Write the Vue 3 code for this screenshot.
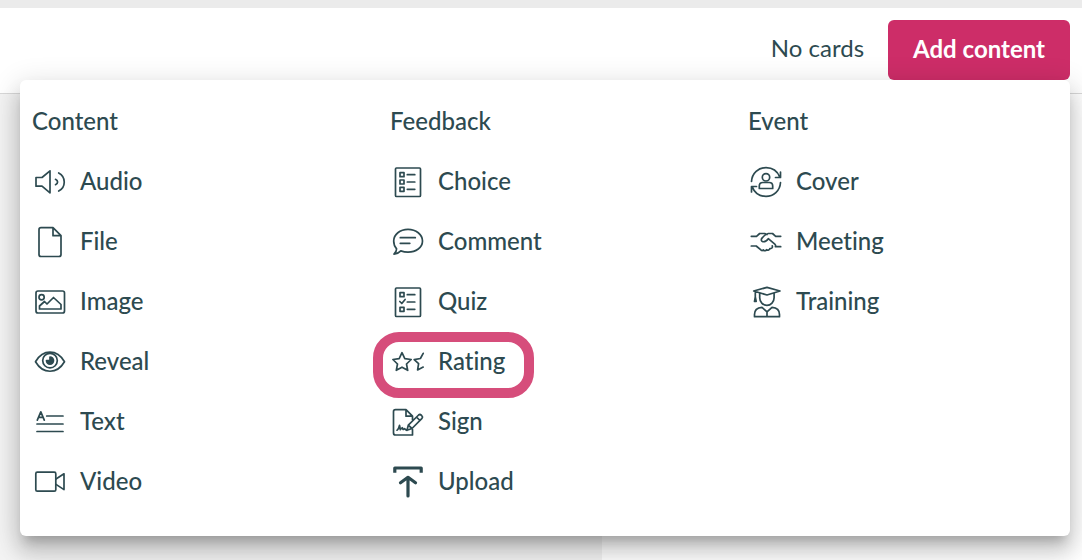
<script setup>
import { ref } from 'vue'

const open = ref(true)

const groups = [
  {
    title: 'Content',
    items: [
      { name: 'Audio', icon: 'audio' },
      { name: 'File', icon: 'file' },
      { name: 'Image', icon: 'image' },
      { name: 'Reveal', icon: 'reveal' },
      { name: 'Text', icon: 'text' },
      { name: 'Video', icon: 'video' },
    ],
  },
  {
    title: 'Feedback',
    items: [
      { name: 'Choice', icon: 'choice' },
      { name: 'Comment', icon: 'comment' },
      { name: 'Quiz', icon: 'quiz' },
      { name: 'Rating', icon: 'rating', marked: true },
      { name: 'Sign', icon: 'sign' },
      { name: 'Upload', icon: 'upload' },
    ],
  },
  {
    title: 'Event',
    items: [
      { name: 'Cover', icon: 'cover' },
      { name: 'Meeting', icon: 'meeting' },
      { name: 'Training', icon: 'training' },
    ],
  },
]

const icons = {
  audio:
    '<path d="M4 13.500h6l8-6.700v22l-8-6.600H4z"/><path d="M23.500 15.300c2.800 1.400 2.800 4 0 5.400M26.700 8.900c7.400 3.800 7.400 14.400 0 18.200"/>',
  file:
    '<path d="M9 3.700h12l8 8V30.500a2 2 0 0 1-2 2H9a2 2 0 0 1-2-2V5.700a2 2 0 0 1 2-2zM21 3.700v8h8"/>',
  image:
    '<rect x="4" y="7" width="28.500" height="22" rx="2"/><circle cx="9.600" cy="13.300" r="2.600"/><path d="M7.500 25v-3l5-4.500 2.500 2.500 6.500-6.500L29 20.500V25z"/>',
  reveal:
    '<path d="M3.500 17.700C11 5 25 5 32.500 17.700C25 30.400 11 30.400 3.500 17.700z"/><circle cx="18" cy="16.600" r="7.300"/><path d="M18 13.100V16.600H14.500A3.500 3.500 0 1 0 18 13.100z" fill="currentColor"/>',
  text:
    '<path d="M5.300 16.200l3.500-8.400 3.500 8.400M6.500 13.400h4.600M14.700 12H31M5 20h26M5 27.500h26"/>',
  video:
    '<rect x="3.800" y="8.200" width="20" height="19" rx="1.500"/><path d="M24 15l8-5.200v15.800l-8-5.200"/>',
  choice:
    '<rect x="5.500" y="4" width="25" height="28.500" rx="1"/><path d="M10 8.700h4v4h-4zM10 16h4v4h-4zM10 23.300h4v4h-4zM17.300 10.700h7.500M17.300 18h7.500M17.300 25.300h7.500"/>',
  comment:
    '<path d="M4 30.200c1.700-1.800 2.600-3.300 2.600-5.400C4.700 22.800 3.700 20 3.700 17C3.700 10.500 10 5.400 18 5.400S32.500 10.500 32.500 17S26 28.200 18 28.200c-2.500 0-5-.5-7.200-1.300C9 28.800 7 30 4 30.200z"/><path d="M10.300 13.700h15M10.300 19.300h9.500"/>',
  quiz:
    '<rect x="5.500" y="4" width="25" height="28.500" rx="1"/><path d="M10 8.700h4v4h-4zM9.800 17.500l2 2 3.300-4M10 23.300h4v4h-4zM17.300 10.700h7.500M17.300 18h7.500M17.300 25.300h7.500"/>',
  rating:
    '<path d="M12 8.700l2.800 5.900 6.400.9-4.700 4.500 1.200 6.300L12 23.200l-5.700 3.100 1.200-6.300L2.900 15.500l6.300-.9z"/><path d="M33.200 9.300l-2.800 5.200-6.200 1.200 4.400 4-1 6.200 5.600-2.800"/>',
  sign:
    '<path d="M22.500 25.500V31H5.500a2 2 0 0 1-2-2V7.700a2 2 0 0 1 2-2H16l6.500 6.500v4M16 5.700v6.500h6.500M17 26.300l1.300-5.200L28.600 11c1.800-1.500 4.900 1.300 3.400 3.300L22 24.500zM26.500 13.200l3.500 3.300M18.300 21.100l3.700 3.400M7 26.200c1.300-.5 2-2.800 2.500-4.800.6 1.500.4 3.500.8 4.300.8-.8 1.200-1.800 2-2 .6.300.2 1.400.9 1.800.7-.2.900-.8 1.500-.8.600.8 1.300 1.400 2.300 1.600"/>',
  upload:
    '<path d="M4.800 8.800V4H31.200V8.800" stroke-width="3.200" stroke-linecap="butt"/><path d="M18 32V14M10.500 18.800L18 13.300l7.500 5.500" stroke-width="3.200"/>',
  cover:
    '<circle cx="18" cy="13.300" r="3.700"/><path d="M11.300 24.500V22c0-2.300 1.500-3.500 3.500-3.500h6.400c2 0 3.500 1.200 3.500 3.500v2.500zM3.500 17.500C4 9 10.500 3.600 18 3.600c6.500 0 11.500 3.700 13.800 9.500M32.500 18.500C32 27 25.500 32.400 18 32.400c-6.500 0-11.500-3.700-13.800-9.500M32.500 8v5.500h-5M3.500 28v-5.500h5"/>',
  meeting:
    '<path d="M3.300 12.300h5.200l3.200-2.800h5l2.300 1M3.300 22h4.900l5 4.200c.9.600 1.700.3 2-.4 1.500 1.500 2.600 1 3.300-.1 1.600.9 2.900.3 3.400-1.200 1.700.3 2.900-.8 2.400-2.600M32.700 12.300h-5l-3.200-2.800h-4.300c-2.300.4-4.200 2.300-6.200 4.600-1.200 1.500-.7 3.300.8 3.600 2.500.3 4.200-1.100 5.500-3l6.500 5.400c.9.900 1.200 1.600.6 2.600h5.300"/>',
  training:
    '<path d="M5.700 7L19 3.400 32 7l-13 4zM11.700 9v4.800c0 4 3.200 7.500 7.200 7.500s7.200-3.500 7.200-7.500V9M7.300 7.800v9M7.300 13l-.8 4.300h1.700zM14 23.300c-4.800.3-7.500 3-7.500 7.200V32.700h25v-2.200c0-4.200-2.700-6.900-7.500-7.200l-5 4.500zM19 28v4.700"/>',
}
</script>

<template>
  <div class="page">
    <header class="bar">
      <span class="count">No cards</span>
      <button class="add" type="button" :aria-expanded="open" aria-controls="content-menu" @click="open = !open">
        Add content
      </button>
      <nav v-show="open" id="content-menu" class="menu" aria-label="Add content">
        <section v-for="group in groups" :key="group.title" class="group">
          <h2 class="title">{{ group.title }}</h2>
          <ul class="list">
            <li v-for="item in group.items" :key="item.name">
              <button class="item" :class="{ marked: item.marked }" type="button">
                <svg class="icon" viewBox="0 0 36 36" aria-hidden="true" v-html="icons[item.icon]"></svg>
                <span>{{ item.name }}</span>
              </button>
            </li>
          </ul>
        </section>
      </nav>
    </header>
    <main class="body">
      <div class="side"></div>
      <div class="main"></div>
    </main>
  </div>
</template>

<style>
body {
  margin: 0;
  overflow: hidden;
}
</style>

<style scoped>
.page {
  display: flex;
  flex-direction: column;
  min-height: 100vh;
  box-sizing: border-box;
  border-top: 8px solid #ebebeb;
  background: #fff;
  color: #2d4a50;
  font-family: Lato, "Open Sans", sans-serif;
  font-size: 24px;
  font-weight: 500;
  font-variant-ligatures: none;
  line-height: 36px;
}
.bar {
  position: relative;
  display: flex;
  align-items: center;
  justify-content: flex-end;
  gap: 24px;
  padding: 12px 12px 13px;
  border-bottom: 1px solid #d8d8d8;
}
.count {
  padding-bottom: 4px;
  font-weight: 400;
}
.add {
  height: 60px;
  padding: 0 25px 2px;
  border: 0;
  border-radius: 6px;
  background: #cd2d68;
  color: #fff;
  font: inherit;
  font-weight: 700;
  font-variant-ligatures: none;
  cursor: pointer;
}
.menu {
  position: absolute;
  top: 72px;
  left: 20px;
  right: 12px;
  z-index: 1;
  display: grid;
  grid-template-columns: repeat(3, 1fr);
  gap: 48px;
  box-sizing: border-box;
  padding: 12px 12px 24px;
  border-radius: 6px;
  background: #fff;
  box-shadow:
    0 10px 10px -6px rgba(0, 0, 0, 0.2),
    0 16px 20px 2px rgba(0, 0, 0, 0.14),
    0 6px 28px 4px rgba(0, 0, 0, 0.12);
}
.title {
  margin: 0;
  padding: 11px 0 13px;
  font: inherit;
  font-variant-ligatures: none;
}
.list {
  margin: 0;
  padding: 0;
  list-style: none;
}
.item {
  position: relative;
  display: flex;
  align-items: center;
  gap: 12px;
  height: 60px;
  padding: 0;
  border: 0;
  background: none;
  color: inherit;
  font: inherit;
  font-variant-ligatures: none;
  cursor: pointer;
}
.item span {
  padding-bottom: 2px;
}
.marked::after {
  content: "";
  position: absolute;
  inset: 0 -29px -6px -17px;
  border: 10px solid #d64d7b;
  border-radius: 26px;
}
.icon {
  width: 36px;
  height: 36px;
  fill: none;
  stroke: currentColor;
  stroke-width: 1.7;
  stroke-linecap: round;
  stroke-linejoin: round;
}
.body {
  display: flex;
  flex: 1;
}
.side {
  flex: 0 0 602px;
  background: #f3f3f3;
}
.main {
  flex: 1;
}
</style>
